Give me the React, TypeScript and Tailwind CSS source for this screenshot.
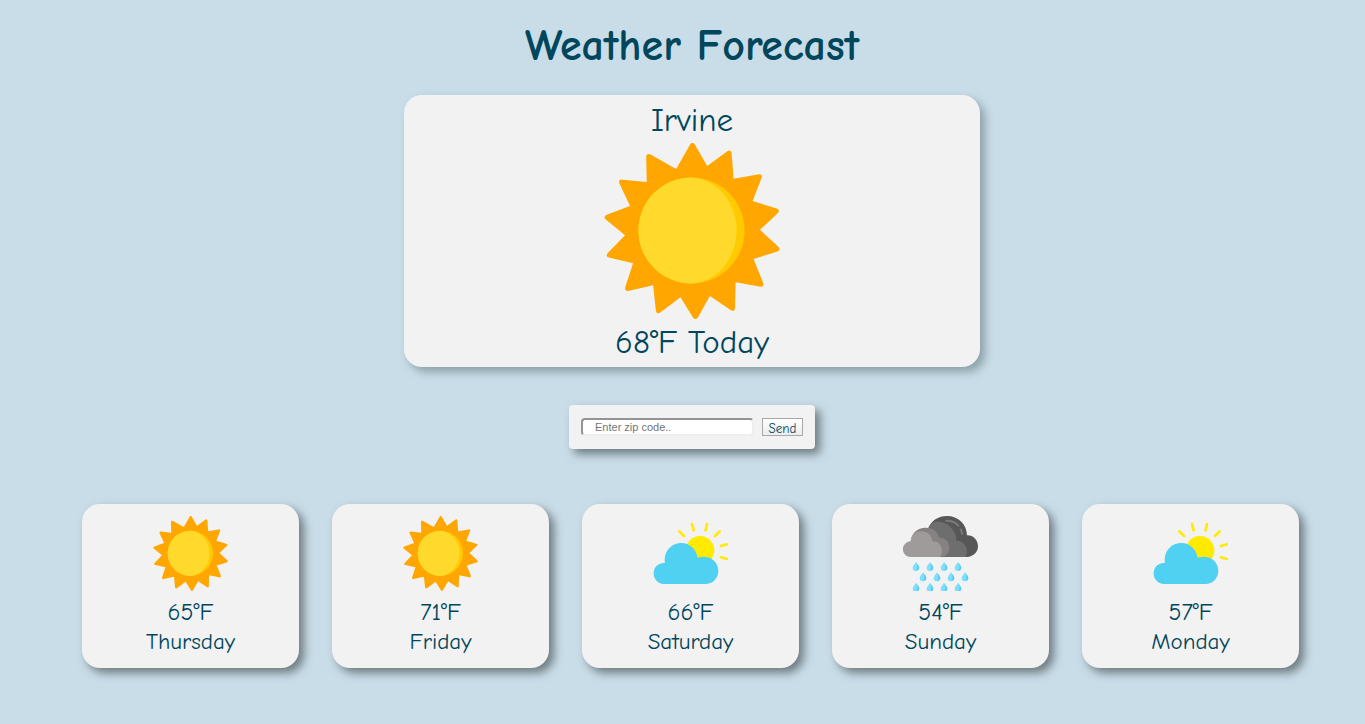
import { useState } from "react";

type Point = [number, number];

const sunTips: Point[] = [
  [309, 153], [425, 177], [521, 252], [575, 361], [577, 482], [526, 594], [436, 670],
  [318, 696], [201, 677], [103, 607], [45, 501], [38, 381], [84, 269], [170, 188],
];
const sunValleys: Point[] = [
  [353, 230], [432, 268], [489, 335], [511, 421], [492, 508], [438, 578], [361, 619],
  [273, 623], [191, 587], [131, 521], [107, 437], [122, 350], [172, 278], [260, 239],
];

function toward(from: Point, to: Point, distance: number): string {
  const dx = to[0] - from[0];
  const dy = to[1] - from[1];
  const k = distance / Math.hypot(dx, dy);
  return `${(from[0] + dx * k).toFixed(1)} ${(from[1] + dy * k).toFixed(1)}`;
}

const rays =
  "M" +
  sunTips
    .map((tip, i) => {
      const before = sunValleys[(i + 13) % 14];
      const after = sunValleys[i];
      return `${toward(tip, before, 17)} Q${tip[0]} ${tip[1]} ${toward(tip, after, 17)} L${after[0]} ${after[1]}`;
    })
    .join(" L") +
  "Z";

function Sun({ className }: { className: string }) {
  return (
    <svg viewBox="45 161 525 527" className={className} role="img" aria-label="Sunny">
      <path d={rays} fill="#ffa600" />
      <circle cx="306" cy="423" r="159" fill="#ffca00" />
      <path d="M306 264A159 159 0 0 0 306 582C382 577 441 508 441 423S382 269 306 264Z" fill="#ffda2d" />
    </svg>
  );
}

function PartlyCloudy({ className }: { className: string }) {
  return (
    <svg viewBox="39 33 225 225" className={className} role="img" aria-label="Partly cloudy">
      <circle cx="180" cy="136" r="43" fill="#ffea00" />
      <path
        d="M118 79l14 14M156 57l5 19M201 57l-4 19M239 79l-14 14M243 123l18-5M243 157l18 5"
        stroke="#ffea00"
        strokeWidth="8"
        strokeLinecap="round"
      />
      <path
        d="M71 237A32 32 0 0 1 75 173C70 140 94 114 124 114C149 114 169 133 173 158C205 147 235 167 235 197C235 220 218 237 196 237Z"
        fill="#50d1f1"
      />
    </svg>
  );
}

const drops: Point[] = [
  [78, 171], [120, 171], [162, 171], [204, 171],
  [99, 202], [141, 202], [183, 202], [225, 202],
  [78, 233], [120, 233], [162, 233], [204, 233],
];

function Rain({ className }: { className: string }) {
  return (
    <svg viewBox="39 33 225 225" className={className} role="img" aria-label="Rain">
      <path
        d="M114 156V72C123 47 145 33 171 33C205 33 230 57 231 91C249 90 264 105 264 124C264 142 249 156 231 156Z"
        fill="#575757"
      />
      <path
        d="M113 73C119 59 129 50 141 50C174 50 199 74 199 107C217 107 231 121 231 139Q231 149 226 156H110Z"
        fill="#6e6e6e"
      />
      <path d="M169 47Q193 47 205 62M212 74Q216 79 216 86" stroke="#7b7b7b" strokeWidth="6" strokeLinecap="round" fill="none" />
      <path
        d="M62 109C65 84 81 68 107 68C128 68 144 80 148 98C166 97 178 111 178 127C178 144 167 156 150 156H64Z"
        fill="#878282"
      />
      <path
        d="M62 156A23 23 0 0 1 62 109C64 91 76 79 92 79C112 79 126 91 127 109C144 108 156 121 156 137Q156 149 150 156Z"
        fill="#a09b9b"
      />
      {drops.map(([x, y]) => (
        <g key={`${x}-${y}`}>
          <path d={`M${x} ${y}C${x + 4} ${y + 7} ${x + 10} ${y + 12} ${x + 10} ${y + 18}A10 9 0 0 1 ${x - 10} ${y + 18}C${x - 10} ${y + 12} ${x - 4} ${y + 7} ${x} ${y}Z`} fill="#7be0ff" />
          <path d={`M${x} ${y}C${x + 4} ${y + 7} ${x + 10} ${y + 12} ${x + 10} ${y + 18}Q${x + 9} ${y + 25} ${x} ${y + 26}Q${x + 9} ${y + 18} ${x} ${y}Z`} fill="#5bc8f2" />
        </g>
      ))}
    </svg>
  );
}

const forecast = [
  { day: "Thursday", temp: "65°F", Icon: Sun },
  { day: "Friday", temp: "71°F", Icon: Sun },
  { day: "Saturday", temp: "66°F", Icon: PartlyCloudy },
  { day: "Sunday", temp: "54°F", Icon: Rain },
  { day: "Monday", temp: "57°F", Icon: PartlyCloudy },
];

export default function App() {
  const [zip, setZip] = useState("");

  return (
    <div className="flex min-h-screen flex-col items-center bg-[#c9dde8] pb-14 pl-[19px] pt-4 font-['Comic_Sans_MS','Comic_Neue','Open_Sans',sans-serif] text-[#00465c]">
      <h1 className="text-[44px] font-bold leading-[60px]">Weather Forecast</h1>

      <main className="mt-[19px] flex w-full flex-col items-center">
        <section className="flex w-full max-w-[576px] flex-col items-center rounded-[18px] bg-[#f2f2f2] pb-[2px] pt-[3px] shadow-[5px_5px_10px_#8ba0a8]">
          <h2 className="text-[33px] leading-[45px]">Irvine</h2>
          <Sun className="size-44" />
          <p className="mt-px text-[33px] leading-[45px]">68°F Today</p>
        </section>

        <form
          className="mt-[38px] flex h-11 items-center gap-2 rounded-[4px] bg-[#f2f2f2] px-3 shadow-[5px_5px_10px_#6d7b81]"
          onSubmit={(event) => event.preventDefault()}
        >
          <input
            aria-label="Zip code"
            placeholder="Enter zip code.."
            value={zip}
            onChange={(event) => setZip(event.target.value)}
            className="h-[18px] w-[173px] rounded-[4px] border-2 border-b-[#eeeeee] border-l-[#949494] border-r-[#eeeeee] border-t-[#949494] bg-white px-3 font-['Liberation_Sans',sans-serif] text-[11px] leading-[14px] placeholder:text-[#757575]"
          />
          <button
            type="submit"
            className="h-[18px] w-[41px] border border-[#a9a9a9] bg-linear-to-b from-white to-[#ececec] pt-[3px] text-[13px] leading-[13px]"
          >
            Send
          </button>
        </form>

        <section aria-label="Five day forecast" className="mt-[55px] grid w-full grid-cols-5 gap-[33px] pl-[63px] pr-[66px]">
          {forecast.map(({ day, temp, Icon }) => (
            <article
              key={day}
              className="flex flex-col items-center rounded-[18px] bg-[#f2f2f2] pb-3 pt-3 text-[23px] leading-[29px] shadow-[5px_5px_10px_#6d7b81]"
            >
              <Icon className="size-[75px]" />
              <p className="mt-[7px] text-[24px]">{temp}</p>
              <h3>{day}</h3>
            </article>
          ))}
        </section>
      </main>
    </div>
  );
}
